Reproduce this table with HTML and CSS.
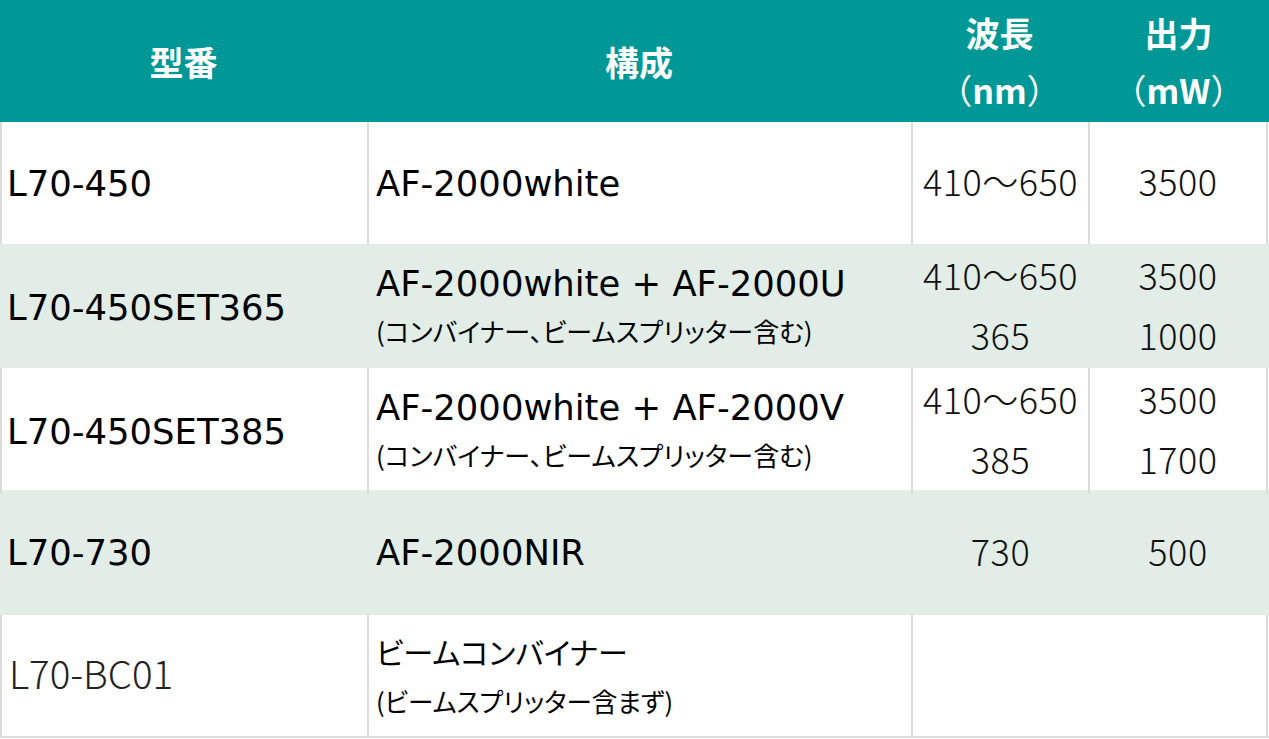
FILE: index.html
```html
<!DOCTYPE html>
<html lang="ja">
<head>
<meta charset="utf-8">
<title>L70 シリーズ</title>
<link rel="stylesheet" href="styles.css">
</head>
<body>
<div class="spec">
  <div class="row head">
    <div class="cell">型番</div>
    <div class="cell">構成</div>
    <div class="cell two">
      <span>波長</span>
      <span><span class="paren">（</span>nm<span class="paren">）</span></span>
    </div>
    <div class="cell two">
      <span>出力</span>
      <span><span class="paren">（</span>mW<span class="paren">）</span></span>
    </div>
  </div>

  <div class="row r1">
    <div class="cell model">L70-450</div>
    <div class="cell conf"><span class="main">AF-2000white</span></div>
    <div class="cell num"><span>410～650</span></div>
    <div class="cell num"><span>3500</span></div>
  </div>

  <div class="row alt r2">
    <div class="cell model">L70-450SET365</div>
    <div class="cell conf">
      <span class="main">AF-2000white + AF-2000U</span>
      <span class="sub">(コンバイナー、ビームスプリッター含む)</span>
    </div>
    <div class="cell num"><span>410～650</span><span>365</span></div>
    <div class="cell num"><span>3500</span><span>1000</span></div>
  </div>

  <div class="row r3">
    <div class="cell model">L70-450SET385</div>
    <div class="cell conf">
      <span class="main">AF-2000white + AF-2000V</span>
      <span class="sub">(コンバイナー、ビームスプリッター含む)</span>
    </div>
    <div class="cell num"><span>410～650</span><span>385</span></div>
    <div class="cell num"><span>3500</span><span>1700</span></div>
  </div>

  <div class="row alt r4">
    <div class="cell model">L70-730</div>
    <div class="cell conf"><span class="main">AF-2000NIR</span></div>
    <div class="cell num"><span>730</span></div>
    <div class="cell num"><span>500</span></div>
  </div>

  <div class="row r5">
    <div class="cell model light">L70-BC01</div>
    <div class="cell conf">
      <span class="main jp">ビームコンバイナー</span>
      <span class="sub">(ビームスプリッター含まず)</span>
    </div>
    <div class="cell num span2"></div>
  </div>
</div>
</body>
</html>
```

FILE: styles.css
```css
* { box-sizing: border-box; }

html, body {
  margin: 0;
  padding: 0;
  background: #ffffff;
}

.spec {
  width: 1269px;
  font-family: "DejaVu Sans", "Noto Sans CJK JP", sans-serif;
  color: #000;
}

.row {
  display: grid;
  grid-template-columns: 367px 544px 177px 180px;
}

.cell {
  display: flex;
  flex-direction: column;
  justify-content: center;
  border-left: 2px solid #dcdcdc;
  padding-left: 6px;
}

.cell:last-child {
  border-right: 2px solid #dcdcdc;
}

.span2 {
  grid-column: span 2;
}

/* header */
.head {
  background: #009896;
  height: 122px;
  grid-template-columns: 367px 544px 177px 181px;
  color: #fff;
  font-family: "Noto Sans CJK JP", sans-serif;
  font-weight: 700;
  font-size: 34px;
}

.head .cell {
  border: none;
  padding: 0;
  align-items: center;
  text-align: center;
  line-height: 57px;
}

.head .paren {
  font-weight: 400;
  font-feature-settings: "halt";
}

/* body rows */
.r1 { height: 122px; }
.r2 { height: 124px; }
.r3 { height: 122px; }
.r4 { height: 125px; }
.r5 { height: 123px; border-bottom: 2px solid #dcdcdc; }

.alt { background: #e2ede7; }
.alt .cell,
.alt .cell:last-child { border-color: transparent; }

.model {
  font-size: 35.4px;
  padding-left: 5px;
}

.model.light {
  font-family: "Noto Sans CJK JP", sans-serif;
  font-weight: 300;
  font-size: 38.5px;
  color: #222;
  padding-left: 7px;
  padding-bottom: 8px;
}

.conf {
  padding-left: 7px;
}

.conf .main {
  font-size: 35.4px;
  line-height: 47px;
}

.conf .sub {
  font-family: "Noto Sans CJK JP", sans-serif;
  font-feature-settings: "palt";
  font-size: 26px;
  line-height: 47px;
}

.r5 .conf .main.jp {
  font-family: "Noto Sans CJK JP", sans-serif;
  font-feature-settings: "palt";
  font-size: 30px;
  line-height: 50px;
}

.r5 .conf .sub {
  font-size: 25.6px;
  line-height: 50px;
}

.num {
  align-items: center;
  padding-left: 0;
  padding-bottom: 6px;
  font-family: "Noto Sans CJK JP", sans-serif;
  font-weight: 300;
  font-size: 36px;
  letter-spacing: 0.5px;
  line-height: 60px;
  color: #111;
}
```
